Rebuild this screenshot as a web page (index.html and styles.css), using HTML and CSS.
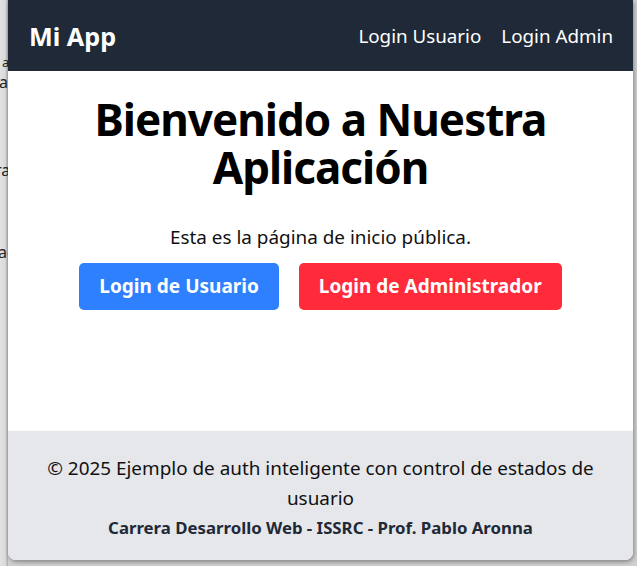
FILE: index.html
```html
<!DOCTYPE html>
<html lang="es">
<head>
<meta charset="utf-8">
<title>Mi App</title>
<link rel="stylesheet" href="styles.css">
</head>
<body>
<div class="desk">
  <div class="behind">
    <div class="frag f1">a</div>
    <div class="frag f2">a</div>
    <div class="frag f3">ra</div>
    <div class="frag f4">ac</div>
  </div>
  <div class="window">
    <header class="topbar">
      <div class="brand">Mi App</div>
      <nav class="nav">
        <a class="nav-link" href="#">Login Usuario</a>
        <a class="nav-link" href="#">Login Admin</a>
      </nav>
    </header>
    <main class="main">
      <h1 class="title">Bienvenido a Nuestra<br>Aplicación</h1>
      <p class="lead">Esta es la página de inicio pública.</p>
      <div class="actions">
        <a class="btn btn-blue" href="#">Login de Usuario</a>
        <a class="btn btn-red" href="#">Login de Administrador</a>
      </div>
    </main>
    <footer class="footer">
      <p class="copy">© 2025 Ejemplo de auth inteligente con control de estados de usuario</p>
      <p class="credit">Carrera Desarrollo Web - ISSRC - Prof. Pablo Aronna</p>
    </footer>
  </div>
</div>
</body>
</html>
```
FILE: styles.css
```css
* { box-sizing: border-box; }
html, body { margin: 0; padding: 0; }
body {
  background: #cfcfcf;
  font-family: "Noto Sans", "Open Sans", sans-serif;
  width: 637px;
  height: 566px;
  overflow: hidden;
}
.desk {
  display: flex;
  height: 566px;
}
.behind {
  width: 8px;
  flex: 0 0 8px;
  overflow: hidden;
  background: linear-gradient(to right, #e2e2e2 0, #d8d8d8 6px, #a9a9a9 7px, #c4c4c4 8px);
  color: #222;
  font-size: 16px;
  line-height: 20px;
}
.frag { white-space: nowrap; }
.f1 { margin-top: 52px; font-size: 13px; margin-left: 2px; }
.f2 { margin-top: 0; margin-left: -1px; }
.f3 { margin-top: 68px; margin-left: -5px; }
.f4 { margin-top: 62px; margin-left: -2px; }

.window {
  width: 625px;
  height: 560px;
  background: #fff;
  border-radius: 0 0 8px 8px;
  box-shadow: 1px 2px 4px rgba(0,0,0,0.35);
  display: flex;
  flex-direction: column;
  overflow: hidden;
}
.topbar {
  height: 71px;
  background: #1f2937;
  color: #fff;
  display: flex;
  align-items: center;
  justify-content: space-between;
  padding: 0 20px 0 21px;
}
.brand { font-size: 25.2px; font-weight: 700; }
.nav { display: flex; gap: 20px; }
.nav-link { color: #fff; text-decoration: none; font-size: 18.8px; }

.main {
  flex: 1;
  padding-top: 24px;
  text-align: center;
}
.title {
  margin: 0;
  font-size: 44px;
  letter-spacing: -1px;
  line-height: 48px;
  font-weight: 700;
  color: #000;
}
.lead {
  margin: 32px 0 0;
  font-size: 18.9px;
  line-height: 28px;
  color: #111;
}
.actions {
  display: flex;
  justify-content: center;
  gap: 20px;
  margin-top: 12px;
}
.btn {
  display: block;
  padding: 10px 20px;
  font-size: 19px;
  line-height: 27px;
  font-weight: 700;
  color: #fff;
  text-decoration: none;
  border-radius: 5px;
}
.btn-blue { background: #2f80ff; }
.btn-red { background: #ff2b3a; }

.footer {
  height: 129px;
  background: #e5e7eb;
  text-align: center;
  padding: 22px 20px 0;
}
.copy {
  margin: 0;
  font-size: 18.9px;
  line-height: 30px;
  color: #111;
}
.credit {
  margin: 0;
  font-size: 16.8px;
  line-height: 30px;
  font-weight: 700;
  color: #1f2937;
}
```
